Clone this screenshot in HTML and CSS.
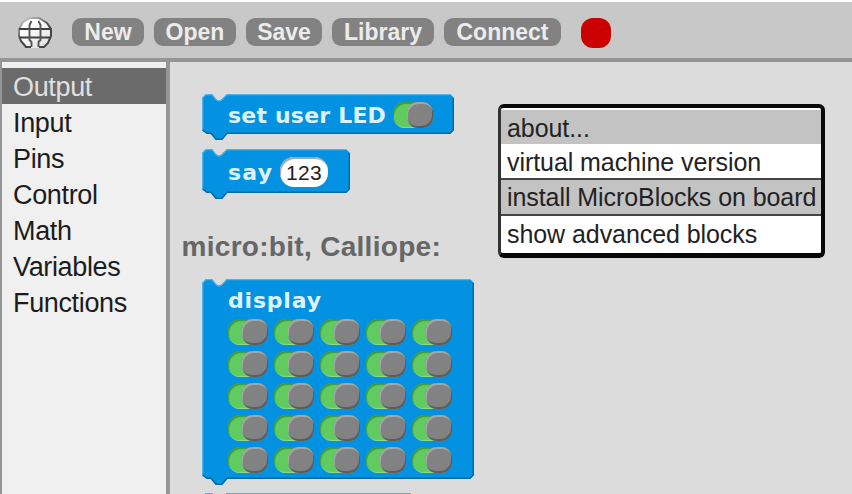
FILE: index.html
```html
<!DOCTYPE html>
<html lang="en">
<head>
<meta charset="utf-8">
<title>MicroBlocks</title>
<link rel="stylesheet" href="styles.css">
</head>
<body>
<header class="topbar">
  <svg class="globe" width="34" height="32" viewBox="0 0 34 32">
    <defs>
      <linearGradient id="face" x1="0" y1="0" x2="1" y2="1"><stop offset="0.3" stop-color="#fff"/><stop offset="1" stop-color="#dcdcdc"/></linearGradient>
      <linearGradient id="rim" x1="0" y1="0" x2="0.6" y2="1"><stop offset="0.15" stop-color="#b4b4b4"/><stop offset="0.6" stop-color="#444"/></linearGradient>
    </defs>
    <path d="M12 1H22V3H26V5H28V7H30V9H32V13H34V21H32V25H30V28H28V30H26V32H8V30H6V28H4V26H2V22H0V13H2V9H4V7H6V5H8V3H12Z" fill="url(#face)"/>
    <path d="M13 31H8L3 25L1 20V13L5 6L12 2H21L29 7L33 13V20L30 27L26 31H21" fill="none" stroke="url(#rim)" stroke-width="2"/>
    <path d="M1 13H33M1 21.500H33" fill="none" stroke="#404040" stroke-width="2.200"/>
    <path d="M13.500 5L11.500 9V24L13.500 26V31M20.500 5L22.500 9V24L20.500 26V31" fill="none" stroke="#555" stroke-width="1.900"/>
  </svg>
  <nav class="buttons">
    <button class="btn new"><span>New</span></button>
    <button class="btn open"><span>Open</span></button>
    <button class="btn save"><span>Save</span></button>
    <button class="btn library"><span>Library</span></button>
    <button class="btn connect"><span>Connect</span></button>
  </nav>
  <span class="status"></span>
</header>
<main class="workspace">
  <ul class="categories">
    <li class="selected">Output</li>
    <li>Input</li>
    <li>Pins</li>
    <li>Control</li>
    <li>Math</li>
    <li>Variables</li>
    <li>Functions</li>
  </ul>
  <section class="palette">
    <div class="block led">
      <svg class="shape" width="252" height="47">
        <path d="M0 4L4 0H10L14 5Q17 8 20 5L25 0H248L252 4V36L248 40H25L20 46H14L9 40H5L0 36Z" fill="#0392e1"/>
        <path d="M.6 36V4L4 .6H10L14 5.600Q17 8.600 20 5.600L25 .6H248" fill="none" stroke="#4fb3ea" stroke-width="1.300"/>
        <path d="M251.300 4V36L248 39.300H25L20 45.300H14L9 39.300H5L.6 36" fill="none" stroke="#026aa4" stroke-width="1.500"/>
      </svg>
      <span class="label">set user LED</span><span class="toggle"></span>
    </div>
    <div class="block say">
      <svg class="shape" width="148" height="51">
        <path d="M0 4L4 0H10L14 5Q17 8 20 5L25 0H144L148 4V40L144 44H25L20 50H14L9 44H5L0 40Z" fill="#0392e1"/>
        <path d="M.6 40V4L4 .6H10L14 5.600Q17 8.600 20 5.600L25 .6H144" fill="none" stroke="#4fb3ea" stroke-width="1.300"/>
        <path d="M147.300 4V40L144 43.300H25L20 49.300H14L9 43.300H5L.6 40" fill="none" stroke="#026aa4" stroke-width="1.500"/>
      </svg>
      <span class="label">say</span><span class="number">123</span>
    </div>
    <h2 class="heading">micro:bit, Calliope:</h2>
    <div class="block display">
      <svg class="shape" width="272" height="207">
        <path d="M0 4L4 0H10L14 5Q17 8 20 5L25 0H268L272 4V196L268 200H25L20 206H14L9 200H5L0 196Z" fill="#0392e1"/>
        <path d="M.6 196V4L4 .6H10L14 5.600Q17 8.600 20 5.600L25 .6H268" fill="none" stroke="#4fb3ea" stroke-width="1.300"/>
        <path d="M271.300 4V196L268 199.300H25L20 205.300H14L9 199.300H5L.6 196" fill="none" stroke="#026aa4" stroke-width="1.500"/>
      </svg>
      <span class="label">display</span>
      <div class="matrix">
        <span class="toggle"></span><span class="toggle"></span><span class="toggle"></span><span class="toggle"></span><span class="toggle"></span>
        <span class="toggle"></span><span class="toggle"></span><span class="toggle"></span><span class="toggle"></span><span class="toggle"></span>
        <span class="toggle"></span><span class="toggle"></span><span class="toggle"></span><span class="toggle"></span><span class="toggle"></span>
        <span class="toggle"></span><span class="toggle"></span><span class="toggle"></span><span class="toggle"></span><span class="toggle"></span>
        <span class="toggle"></span><span class="toggle"></span><span class="toggle"></span><span class="toggle"></span><span class="toggle"></span>
      </div>
    </div>
    <div class="block next">
      <svg class="shape" width="212" height="40">
        <path d="M0 4L4 0H10L14 5Q17 8 20 5L25 0H208L212 4V40H0Z" fill="#0392e1"/>
        <path d="M.6 40V4L4 .6H10L14 5.600Q17 8.600 20 5.600L25 .6H208" fill="none" stroke="#4fb3ea" stroke-width="1.300"/>
      </svg>
    </div>
  </section>
</main>
<ul class="menu">
  <li class="shaded about">about...</li>
  <li class="vm">virtual machine version</li>
  <li class="shaded install">install MicroBlocks on board</li>
  <li class="advanced">show advanced blocks</li>
</ul>
</body>
</html>
```

FILE: styles.css
```css
* { box-sizing: border-box; }
html, body { height: 100%; }
body {
  margin: 0;
  padding-top: 2px;
  display: flex;
  flex-direction: column;
  overflow: hidden;
  background: #fff;
  font-family: "Liberation Sans", Arial, sans-serif;
}
ul { list-style: none; margin: 0; padding: 0; }

.topbar {
  flex: none;
  display: flex;
  align-items: flex-start;
  height: 60px;
  padding: 14px 0 0 18px;
  background: #c8c8c8;
  border-bottom: 4px solid #959595;
}
.globe { flex: none; }
.buttons { display: flex; gap: 10px; margin: 2px 0 0 20px; }
.btn {
  height: 28px;
  padding: 0;
  border: 0;
  border-radius: 9px;
  background: #828282;
  color: #ececec;
  font: bold 23px/28px "Liberation Sans", Arial, sans-serif;
  letter-spacing: 0;
  white-space: nowrap;
}
.new { width: 72px; }
.open { width: 82px; }
.save { width: 76px; }
.library { width: 102px; }
.connect { width: 117px; }
.status {
  width: 30px;
  height: 30px;
  margin: 2px 0 0 20px;
  border-radius: 12px;
  background: #cb0000;
}

.workspace { flex: 1; display: flex; min-height: 0; border-left: 2px solid #959595; }
.categories {
  flex: none;
  width: 168px;
  padding-top: 6px;
  background: #f0f0f0;
  border-right: 4px solid #959595;
}
.categories li {
  height: 36px;
  padding-left: 11px;
  font-size: 27px;
  line-height: 39px;
  letter-spacing: -0.35px;
  color: #1c1c1c;
}
.categories .selected { background: #6b6b6b; color: #e0e0e0; }

.palette {
  flex: 1;
  min-width: 0;
  padding: 32px 0 0 32px;
  background: #dcdcdc;
  overflow: hidden;
}
.block { position: relative; color: #def1fd; font: bold 22px/26px "DejaVu Sans", sans-serif; }
.shape { position: absolute; left: 0; top: 0; z-index: 0; }
.label, .toggle, .number { position: relative; z-index: 1; }
.led { display: flex; width: 252px; height: 40px; padding: 8px 0 0 26px; }
.led .label { width: 165px; padding-top: 1px; letter-spacing: 0.2px; white-space: nowrap; }
.say { display: flex; width: 148px; height: 44px; margin-top: 15px; padding: 8px 0 0 26px; }
.say .label { width: 52px; padding-top: 3px; letter-spacing: 1.2px; }
.number {
  width: 48px;
  height: 30px;
  border-radius: 14px;
  background: #fff;
  box-shadow: inset 1px 2px 1px #9aa4aa;
  color: #222;
  font: 21px/32px "Liberation Sans", Arial, sans-serif;
  letter-spacing: 0.3px;
  text-align: center;
}
.heading {
  height: 36px;
  margin: 36px 0 14px -20.5px;
  color: #666;
  font-size: 28px;
  line-height: 35px;
  letter-spacing: 0.3px;
  white-space: nowrap;
}
.display { width: 272px; height: 200px; padding: 8px 0 0 26px; }
.display .label { display: block; height: 26px; padding-top: 1px; letter-spacing: 0.8px; }
.matrix { display: grid; grid-template-columns: repeat(5, 40px); gap: 6px; margin-top: 6px; }
.next { height: 40px; margin-top: 14px; }

.toggle {
  display: block;
  width: 40px;
  height: 26px;
  border-radius: 12px;
  background: #60cc60;
  box-shadow: inset 1px 2px 1px #42983f, inset -1px -1px 1px #90dc90;
}
.toggle::after {
  content: "";
  position: absolute;
  right: 0;
  top: 0;
  width: 26px;
  height: 26px;
  border-radius: 11px;
  background: #828282;
  box-shadow: inset 1px 2px 0 #a6a6a6, inset -1px -2px 0 #5c5c5c;
}

.menu {
  position: absolute;
  left: 498px;
  top: 104px;
  width: 327px;
  height: 154px;
  padding-top: 2px;
  border: solid #080808;
  border-width: 4px 4px 5px 3px;
  border-left-color: #333;
  border-radius: 6px;
  background: #fff;
  color: #222;
  font-size: 25px;
  letter-spacing: -0.07px;
  white-space: nowrap;
}
.menu li { height: 34px; padding-left: 6px; line-height: 36px; }
.menu .shaded { background: #c3c3c3; }
.menu .install { height: 38px; line-height: 35px; border: solid #444; border-width: 2px 0; }
```
